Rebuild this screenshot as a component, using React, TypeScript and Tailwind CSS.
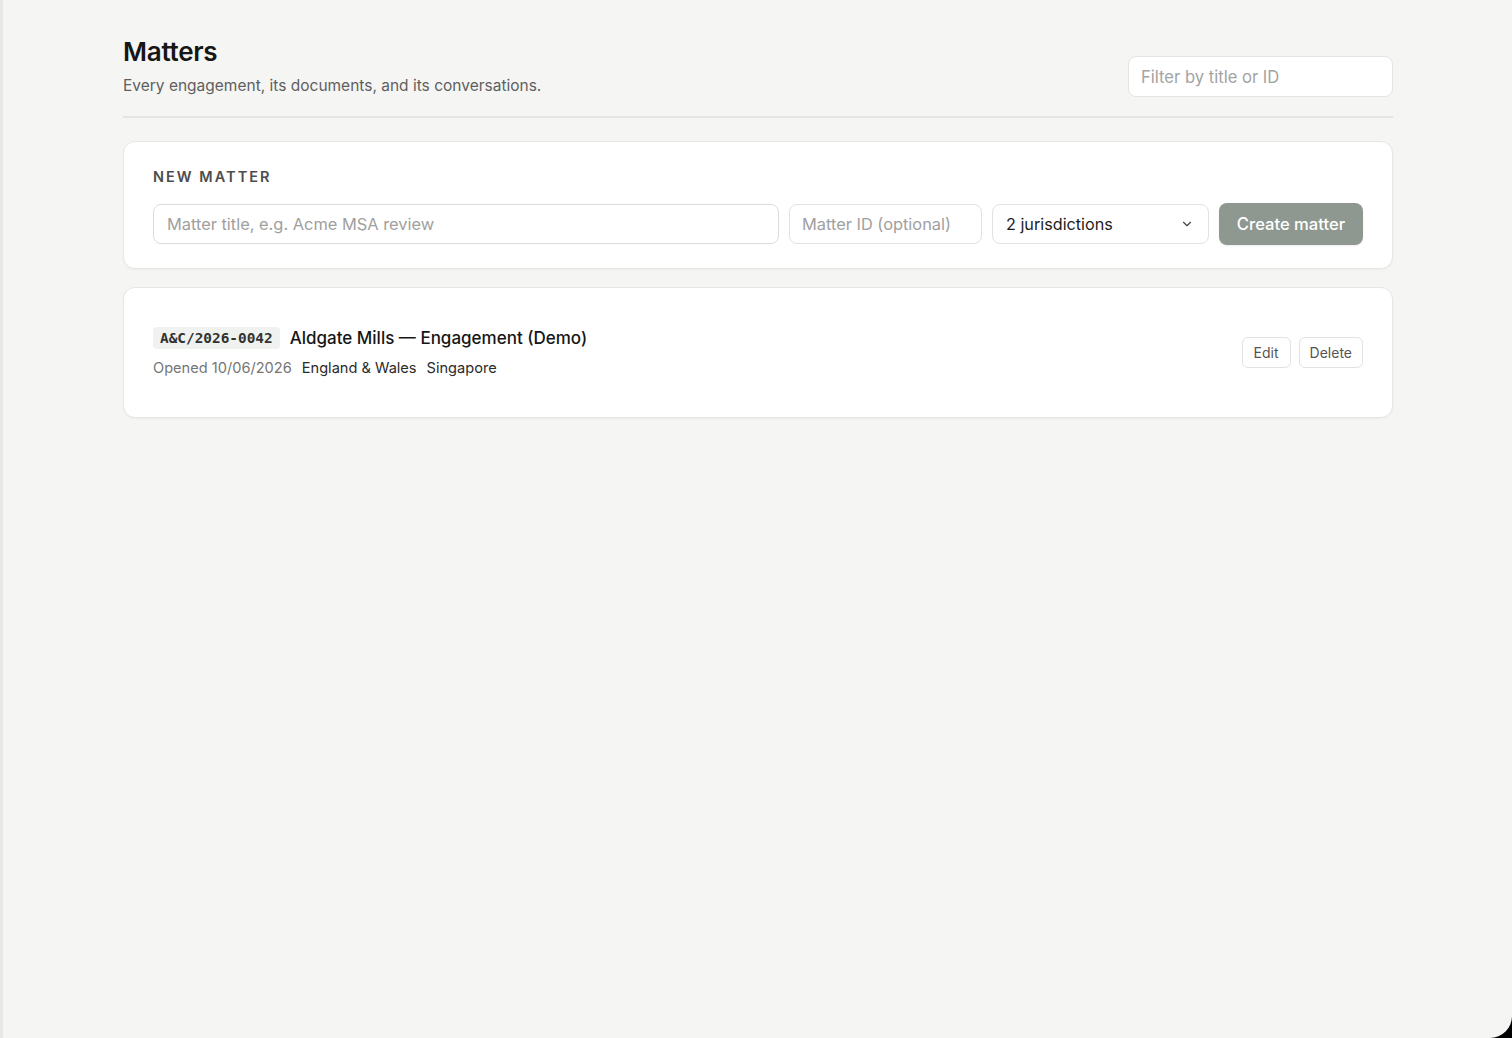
import { ChevronDown } from "lucide-react";

const sans = { fontFamily: "Inter, 'Noto Sans', sans-serif" };

export default function App() {
  return (
    <div className="min-h-[1038px] bg-black" style={sans}>
      <div className="min-h-[1038px] rounded-br-[22px] border-l-[3px] border-[#e7e7e5] bg-[#f5f5f3]">
        <div className="ml-[120px] w-[1270px] pt-[36px]">
          <header className="flex items-end justify-between border-b-2 border-[#e4e4e2] pb-[19px]">
            <div>
              <h1 className="text-[26px] font-semibold leading-8 tracking-[-0.01em] text-[#161616]">Matters</h1>
              <p className="mt-[7px] text-[15.5px] leading-[22px] text-[#5f5f5f]">Every engagement, its documents, and its conversations.</p>
            </div>
            <input
              placeholder="Filter by title or ID"
              className="h-[41px] w-[265px] rounded-lg border border-[#e4e4e2] bg-white px-[12px] text-[16.6px] text-[#222] placeholder:text-[#a3a3a3] outline-none"
            />
          </header>

          <section className="mt-[23px] rounded-xl border border-[#e6e6e4] bg-white px-[29px] pb-[23px] pt-[25px] shadow-[0_1px_2px_rgba(0,0,0,0.04)]">
            <h2 className="text-[14.5px] font-semibold uppercase leading-5 tracking-[0.14em] text-[#4d4d4d]">New matter</h2>
            <div className="mt-[16px] flex items-center gap-[10px]">
              <input
                placeholder="Matter title, e.g. Acme MSA review"
                className="h-10 w-[626px] rounded-lg border border-[#dcdcda] bg-white px-[13px] text-[16.4px] text-[#222] placeholder:text-[#a0a0a0] outline-none"
              />
              <input
                placeholder="Matter ID (optional)"
                className="h-10 w-[193px] rounded-lg border border-[#e2e2e0] bg-white px-[12px] text-[16.4px] text-[#222] placeholder:text-[#a0a0a0] outline-none"
              />
              <div className="flex h-10 w-[217px] items-center justify-between rounded-lg border border-[#e2e2e0] bg-white pl-[13px] pr-[14px] text-[16.2px] text-[#1c1c1c]">
                <span>2 jurisdictions</span>
                <ChevronDown size={14} strokeWidth={2} className="text-[#444]" />
              </div>
              <button className="h-[42px] w-[144px] rounded-lg bg-[#8e9890] text-[16.6px] font-medium text-white shadow-[0_1px_2px_rgba(0,0,0,0.08)]">
                Create matter
              </button>
            </div>
          </section>

          <section className="mt-[18px] flex items-center justify-between rounded-xl border border-[#e6e6e4] bg-white px-[29px] pb-[39px] pt-[38px] shadow-[0_1px_2px_rgba(0,0,0,0.04)]">
            <div>
              <div className="flex items-center gap-[10px]">
                <span
                  className="rounded-[4px] bg-[#eff2ef] px-[7px] py-[1px] text-[14.4px] font-bold leading-5 text-[#333]"
                  style={{ fontFamily: "'DejaVu Sans Mono', 'Liberation Mono', monospace" }}
                >
                  A&amp;C/2026-0042
                </span>
                <span className="text-[17px] font-medium leading-6 text-[#161616]">Aldgate Mills — Engagement (Demo)</span>
              </div>
              <div className="mt-[8px] flex items-center gap-[10px] text-[14.6px] leading-5">
                <span className="text-[#767676]">Opened 10/06/2026</span>
                <span className="text-[#2a2a2a]">England &amp; Wales</span>
                <span className="text-[#2a2a2a]">Singapore</span>
              </div>
            </div>
            <div className="flex items-center gap-2">
              <button className="h-[31px] rounded-md border border-[#e2e2e0] bg-white px-[11px] text-[14px] text-[#555]">Edit</button>
              <button className="h-[31px] rounded-md border border-[#e2e2e0] bg-white px-[10px] text-[14px] text-[#555]">Delete</button>
            </div>
          </section>
        </div>
      </div>
    </div>
  );
}
